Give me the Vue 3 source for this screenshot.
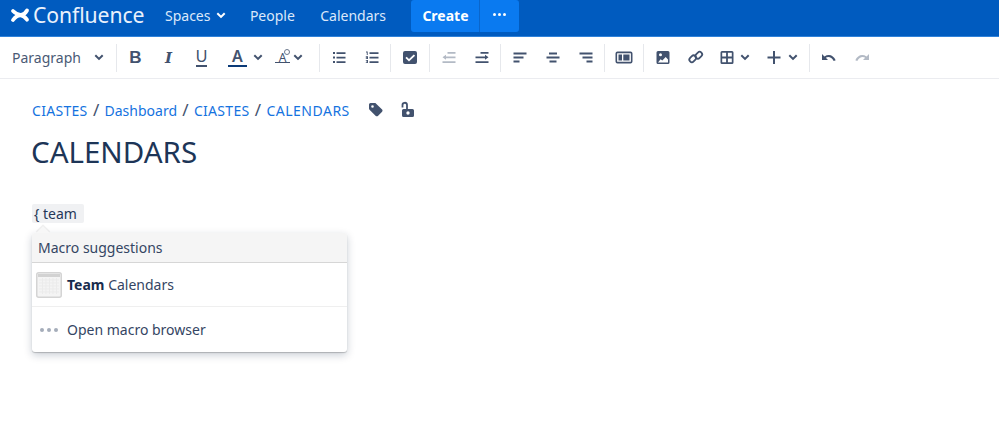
<script setup>
const navLinks = [
  { label: 'Spaces', caret: true },
  { label: 'People' },
  { label: 'Calendars' }
]
const crumbs = [
  { label: 'CIASTES', caps: true },
  { label: 'Dashboard' },
  { label: 'CIASTES', caps: true },
  { label: 'CALENDARS', caps: true, last: true }
]

const P = {
  bullets: 'M4 4h2v2H4zM4 8.500h2v2H4zM4 13h2v2H4zM7.500 4.200H16.500v1.700H7.500zM7.500 8.700H16.500v1.700H7.500zM7.500 13.200H16.500v1.700H7.500z',
  numbers: 'M4 3.500h1.700v3.500H4.800V4.400H4zM3.800 8.200h2.200v2.700H3.800v-.7h1.300v-.4H3.800zM3.800 12h2.200v3H3.800v-.7h1.300V14H4.200v-.6h.9v-.7H3.800zM7.500 4.200H16.500v1.800H7.500zM7.500 8.700H16.500v1.800H7.500zM7.500 13.200H16.500v1.800H7.500z',
  check: 'M5 3h10a2 2 0 0 1 2 2v9a2 2 0 0 1-2 2H5a2 2 0 0 1-2-2V5a2 2 0 0 1 2-2zm8.800 3.400L9 11 6.700 8.800 5.400 10.100 9 13.600l6.100-5.900z',
  outdent: 'M3.500 9.300 7 6.800v1.700h9.500v1.700H7v1.600zM8.500 4h8v1.700h-8zM3.500 13.300h13V15h-13z',
  indent: 'M16.500 9.300 13 6.800v1.700H3.500v1.700H13v1.600zM8.500 4h8v1.700h-8zM3.500 13.300h13V15h-13z',
  left: 'M3.500 4.500h13v2h-13zM3.500 8.500h10v2h-10zM3.500 12.500h6v2h-6z',
  center: 'M6 4.500h8v2H6zM3.500 8.500h13v2h-13zM6.500 12.500h7v2h-7z',
  right: 'M3.500 4.500h13v2h-13zM6.500 8.500h10v2h-10zM10.500 12.500h6v2h-6z',
  layout: 'M3.500 3.500h13A2 2 0 0 1 18.500 5.500v8a2 2 0 0 1-2 2h-13a2 2 0 0 1-2-2v-8a2 2 0 0 1 2-2zm0 1.700a.4.400 0 0 0-.4.400v7.800c0 .2.200.4.400.4h13c.2 0 .4-.2.400-.4V5.600a.4.400 0 0 0-.4-.4zM4.500 6.500h3.500v6H4.500zM9.300 6.500h6.200v6H9.300z',
  image: 'M5 3h10a1.500 1.500 0 0 1 1.500 1.500v10A1.500 1.500 0 0 1 15 16H5a1.500 1.500 0 0 1-1.500-1.500v-10A1.500 1.500 0 0 1 5 3zM7.500 5.200a1.500 1.500 0 1 0 0 3 1.500 1.500 0 0 0 0-3zM5 14.500h10v-3L12.700 9l-3.400 3.600-1.700-1.300z',
  table: 'M5 3h10a1.500 1.500 0 0 1 1.500 1.500v10A1.500 1.500 0 0 1 15 16H5a1.500 1.500 0 0 1-1.500-1.500v-10A1.500 1.500 0 0 1 5 3zm.200 1.700v3.900h3.900V4.700zm5.700 0v3.900h3.900V4.700zm-5.700 5.700v3.900h3.900v-3.900zm5.700 0v3.900h3.900v-3.900z',
  plus: 'M9 3h2v5.500h5.500v2H11V16H9v-5.500H3.500v-2H9z',
  undo: 'M3 6v6h6L6.800 9.800C9.300 8.300 12.800 9.200 14.700 13l2-.7C14.500 7 9.800 5.400 5.400 8.400z',
  redo: 'M17 6v6h-6l2.200-2.200C10.700 8.300 7.200 9.200 5.300 13l-2-.7C5.500 7 10.200 5.400 14.600 8.400z'
}

const groups = [
  [{ glyph: 'B', cls: 'g-bold' }, { glyph: 'I', cls: 'g-italic' }, { glyph: 'U', cls: 'g-under' },
   { glyph: 'A', cls: 'g-color', caret: true, w: 54, pad: 12, gap: 6 }, { glyph: 'A', cls: 'g-clear', caret: true, w: 45, pad: 1, gap: 3 }],
  [{ d: P.bullets }, { d: P.numbers }],
  [{ d: P.check, w: 34 }],
  [{ d: P.outdent, off: true }, { d: P.indent }],
  [{ d: P.left }, { d: P.center }, { d: P.right }],
  [{ d: P.layout, w: 34 }],
  [{ d: P.image }, { link: true }, { d: P.table, caret: true, w: 44, pad: 5, gap: 3 }, { d: P.plus, caret: true, w: 51, pad: 8, gap: 4 }],
  [{ d: P.undo }, { d: P.redo, off: true }]
]
const btnStyle = (b) => (b.w ? { width: b.w + 'px', paddingLeft: b.caret ? b.pad + 'px' : 0 } : null)
</script>

<template>
  <div class="page">
    <header class="nav">
      <div class="brand">
        <svg class="logo" viewBox="0 0 20 16" width="20" height="16">
          <path fill="none" stroke="#fff" stroke-width="3.800" stroke-linecap="round" d="M3 4c3 3 5 3.600 7.500 3.800C13 8 15 7 17 3.500" />
          <path fill="none" stroke="#fff" stroke-width="3.800" stroke-linecap="round" d="M3 13c2.500-3.500 5-4.600 7.500-4.600 2.500 0 4.500 1.600 6.500 4.300" />
        </svg>
        <span class="brand-name">Confluence</span>
      </div>
      <a v-for="l in navLinks" :key="l.label" class="nav-link">
        {{ l.label }}
        <svg v-if="l.caret" class="caret-white" width="10" height="7" viewBox="0 0 10 7"><path d="M1.300 1.200l3.700 3.700 3.700-3.700" fill="none" stroke="#fff" stroke-width="2" /></svg>
      </a>
      <div class="create-wrap">
        <button class="create">Create</button>
        <button class="more"><i></i><i></i><i></i></button>
      </div>
    </header>

    <div class="toolbar">
      <div class="tb-group para">
        <span>Paragraph</span>
        <svg width="10" height="7" viewBox="0 0 10 7"><path d="M1.300 1.200l3.700 3.700 3.700-3.700" fill="none" stroke="#42526e" stroke-width="2" /></svg>
      </div>
      <div v-for="(g, gi) in groups" :key="gi" class="tb-group">
        <div v-for="(b, bi) in g" :key="bi" class="tb-btn" :class="{ off: b.off, wide: b.caret }" :style="btnStyle(b)">
          <svg v-if="b.d" width="20" height="19" viewBox="0 0 20 19"><path :d="b.d" fill="currentColor" fill-rule="evenodd" /></svg>
          <svg v-else-if="b.link" width="20" height="19" viewBox="0 0 20 19"><g fill="none" stroke="currentColor" stroke-width="1.800"><rect x="3" y="8.300" width="7.500" height="5" rx="2.500" transform="rotate(-45 6.750 10.800)" /><rect x="9" y="4.700" width="7.500" height="5" rx="2.500" transform="rotate(-45 12.750 7.200)" /></g></svg>
          <span v-else class="glyph" :class="b.cls">{{ b.glyph }}</span>
          <svg v-if="b.caret" class="tb-caret" :style="{ marginLeft: b.gap + 'px' }" width="10" height="7" viewBox="0 0 10 7"><path d="M1.300 1.200l3.700 3.700 3.700-3.700" fill="none" stroke="#42526e" stroke-width="2" /></svg>
        </div>
      </div>
    </div>

    <main class="content">
      <div class="crumbs">
        <template v-for="(c, i) in crumbs" :key="i">
          <span v-if="i" class="sep">/</span>
          <a class="crumb" :class="{ caps: c.caps, last: c.last }">{{ c.label }}</a>
        </template>
        <svg class="meta first" width="18" height="18" viewBox="0 0 18 18"><path fill="#42526e" fill-rule="evenodd" d="M2 3.500A1.500 1.500 0 0 1 3.500 2h4.300c.4 0 .8.200 1.100.4l6.200 6.200c.6.600.6 1.500 0 2.100l-4.200 4.200c-.6.600-1.500.6-2.100 0L2.500 8.700C2.200 8.400 2 8 2 7.600zM5.500 4.200a1.300 1.300 0 1 0 0 2.600 1.300 1.300 0 0 0 0-2.600z" /></svg>
        <svg class="meta" width="18" height="18" viewBox="0 0 18 18"><path fill="none" stroke="#42526e" stroke-width="1.800" d="M3.500 6.500V4.300A2.200 2.200 0 0 1 8 3.800V8" /><path fill="#42526e" fill-rule="evenodd" d="M4.500 8h9A1.500 1.500 0 0 1 15 9.500v5a1.500 1.500 0 0 1-1.500 1.500h-9A1.500 1.500 0 0 1 3 14.500v-5A1.500 1.500 0 0 1 4.500 8zM9 10.300a1.700 1.700 0 1 0 0 3.400 1.700 1.700 0 0 0 0-3.400z" /></svg>
      </div>
      <h1 class="title">CALENDARS</h1>
      <div class="editor">
        <span class="macro-input">{ team</span>
        <div class="popup">
          <div class="popup-head">Macro suggestions</div>
          <div class="popup-row first-row">
            <svg class="cal" width="26" height="26" viewBox="0 0 26 26">
              <rect x=".75" y=".75" width="24.500" height="24.500" rx="2" fill="#f4f4f4" stroke="#d4d4d4" stroke-width="1.500" />
              <rect x="2" y="2" width="22" height="3" fill="#d2d2d2" />
              <path d="M3 8h20M3 11h20M3 14h20M3 17h20M3 20h20M6.500 6v16M10 6v16M13.500 6v16M17 6v16M20.500 6v16" stroke="#ebebeb" stroke-width="1" />
            </svg>
            <span><b>Team</b> Calendars</span>
          </div>
          <div class="popup-row last-row">
            <span class="dots"><i></i><i></i><i></i></span>
            <span>Open macro browser</span>
          </div>
        </div>
      </div>
    </main>
  </div>
</template>

<style>
html, body { margin: 0; background: #fff; }
</style>

<style scoped>
.page {
  width: 999px;
  height: 432px;
  overflow: hidden;
  font-family: "Noto Sans", sans-serif;
  color: #172b4d;
}
.nav {
  height: 37px;
  box-sizing: border-box;
  background: #005bbf;
  border-bottom: 1px solid #2f82da;
  display: flex;
  align-items: center;
  padding: 0 0 6px 10px;
  color: #deebff;
}
.brand { display: flex; align-items: center; width: 155px; color: #fff; }
.logo { margin-right: 3px; }
.brand-name { font-size: 21.200px; line-height: 30px; letter-spacing: -0.1px; color: #e9f1fc; }
.nav-link {
  font-size: 14px;
  margin-right: 25.400px;
  display: flex;
  align-items: center;
  gap: 6px;
  color: #dbe8fa;
}
.caret-white { margin-right: -2px; }
.create-wrap { display: flex; height: 32px; align-self: flex-start; }
.create {
  width: 69px;
  height: 32px;
  border: 0;
  border-right: 1px solid #0a66cc;
  border-radius: 3px 0 0 3px;
  background: #0a7af0;
  color: #fff;
  font: 700 14px "Noto Sans", sans-serif;
  padding: 0 0 2px;
}
.more {
  width: 39px;
  height: 32px;
  border: 0;
  border-radius: 0 3px 3px 0;
  background: #0a7af0;
  display: flex;
  gap: 2px;
  align-items: center;
  justify-content: center;
  padding: 0 0 3px;
}
.more i { width: 3px; height: 3px; border-radius: 50%; background: #fff; }

.toolbar {
  height: 42px;
  box-sizing: border-box;
  border-bottom: 1px solid #ebecf0;
  display: flex;
  align-items: center;
  color: #42526e;
}
.tb-group {
  display: flex;
  align-items: center;
  height: 28px;
  padding: 0 2px;
  border-right: 1px solid #e6e8ec;
}
.tb-group:last-child { border-right: 0; }
.para {
  width: 117px;
  box-sizing: border-box;
  padding: 0 12px;
  justify-content: space-between;
  font-size: 14px;
  color: #4a5a75;
}
.tb-btn {
  width: 33px;
  height: 28px;
  box-sizing: border-box;
  display: flex;
  align-items: center;
  justify-content: center;
  color: #42526e;
}
.tb-btn.wide { justify-content: flex-start; }
.tb-btn.off { color: #b3bac5; }
.glyph { font-size: 17px; line-height: 20px; display: inline-block; text-align: center; }
.g-bold { font-weight: 700; font-family: "Liberation Sans", sans-serif; }
.g-italic { font: italic 700 15px "DejaVu Serif", serif; }
.g-under { font-family: "Liberation Sans", sans-serif; font-size: 16px; border-bottom: 2px solid #42526e; line-height: 16px; height: 16px; padding: 0; }
.g-color { font-weight: 600; font-size: 16px; line-height: 17px; border-bottom: 2.500px solid #0b3a77; padding: 0 1px; width: 17px; margin-left: -2px; }
.g-clear {
  position: relative;
  font-size: 12px;
  line-height: 14px;
  width: 15px;
  margin-left: 2px;
  color: #42526e;
}
.g-clear::before {
  content: "";
  position: absolute;
  left: 0;
  right: 0;
  bottom: 2px;
  border-bottom: 1px solid #42526e;
}
.g-clear::after {
  content: "";
  position: absolute;
  right: 0;
  top: -2px;
  width: 4px;
  height: 4px;
  border: 1px solid #6b778c;
  border-radius: 50%;
}

.content { padding: 19px 32px 0; }
.crumbs { display: flex; align-items: center; height: 24px; font-size: 14px; }
.crumb { color: #1573e0; }
.crumb.caps { letter-spacing: .3px; }
.crumb.last { letter-spacing: .5px; }
.sep { margin: 0 5.300px; color: #42526e; font-size: 17px; line-height: 20px; }
.meta { margin-left: 14px; }
.meta.first { margin-left: 17px; }
.title {
  margin: 10px 0 0 -1px;
  font-size: 29.500px;
  line-height: 40px;
  font-weight: 400;
  color: #1d3557;
}
.editor { margin-top: 32px; }
.macro-input {
  display: block;
  width: 52px;
  height: 19px;
  box-sizing: border-box;
  background: #f0f1f3;
  border-radius: 2px;
  font-size: 14px;
  line-height: 19px;
  padding: 0 0 0 2px;
  color: #253858;
}
.popup {
  position: relative;
  width: 315px;
  margin-top: 10px;
  background: #fff;
  border-radius: 3px;
  box-shadow: 0 1px 1px rgba(0, 0, 0, .2), 0 3px 8px rgba(9, 30, 66, .22);
  font-size: 14px;
  color: #344563;
}
.popup::before {
  content: "";
  position: absolute;
  left: 6px;
  top: -5px;
  width: 10px;
  height: 10px;
  background: #f7f7f7;
  transform: rotate(45deg);
  box-shadow: -1px -1px 1px rgba(0, 0, 0, .08);
}
.popup-head {
  position: relative;
  height: 30px;
  box-sizing: border-box;
  line-height: 29px;
  padding-left: 6px;
  background: #f5f5f5;
  border-bottom: 1px solid #d6d6d6;
  border-radius: 3px 3px 0 0;
}
.popup-row {
  display: flex;
  align-items: center;
  height: 44px;
  box-sizing: border-box;
  padding-left: 4px;
  gap: 5px;
}
.first-row { border-bottom: 1px solid #efefef; }
.first-row b { font-weight: 700; color: #172b4d; }
.last-row { height: 45px; padding-left: 8px; gap: 9px; }
.dots { display: flex; gap: 3px; width: 18px; }
.dots i { width: 4px; height: 4px; border-radius: 50%; background: #a5adba; }
</style>
